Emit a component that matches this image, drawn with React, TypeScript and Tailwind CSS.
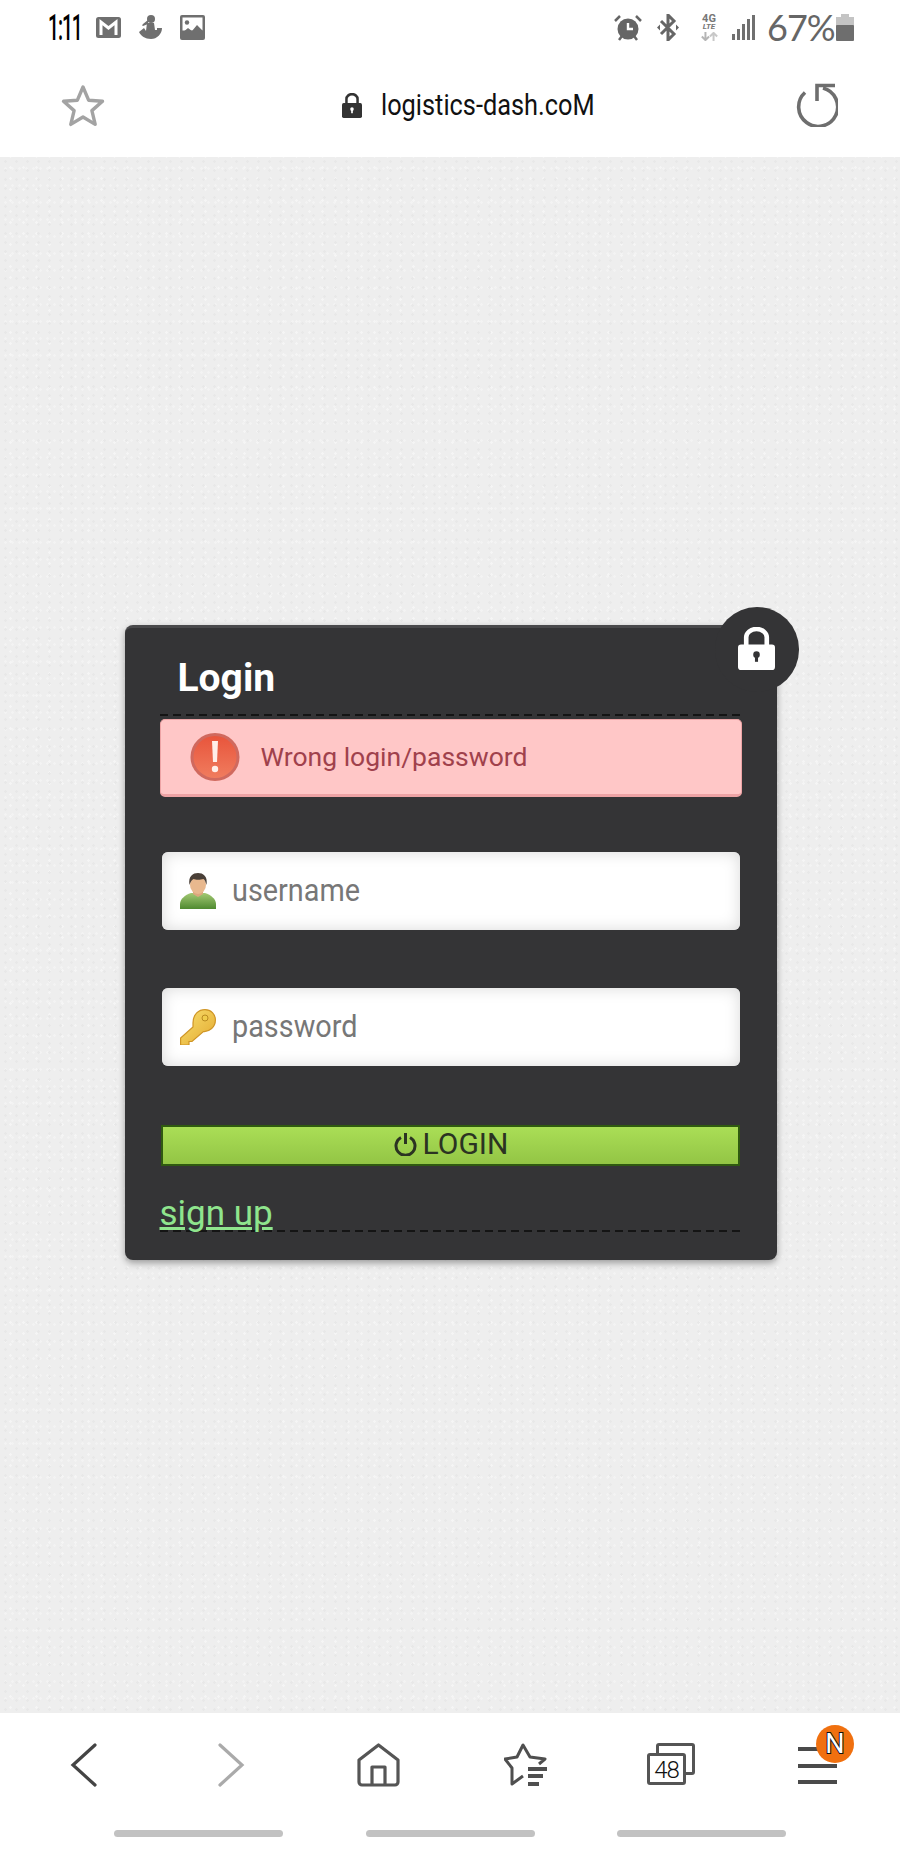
import React from "react";

const Star = () => (
  <svg width="44" height="43" viewBox="0 0 44 43" fill="none" stroke="#a3a3a3" strokeWidth="3.400" strokeLinejoin="round">
    <path d="M22 3l5.600 13.200 13.900 1.100-10.600 9.300 3.300 13.800L22 33l-12.200 7.400 3.300-13.800L2.500 17.300l13.900-1.100z" />
  </svg>
);

const Reload = () => (
  <svg width="44" height="44" viewBox="0 0 44 44" fill="none" stroke="#6e6e6e" strokeWidth="3.600">
    <path d="M11 9.500A19.500 19.500 0 1 0 29 5" />
    <path d="M23 18V2.500h18" strokeLinejoin="miter" />
  </svg>
);

const Lock = ({ className, hole }: { className: string; hole: string }) => (
  <svg className={className} viewBox="0 0 36 42" preserveAspectRatio="none">
    <path d="M8 19v-9a10 8 0 0 1 20 0v9" fill="none" stroke="currentColor" strokeWidth="4.500" />
    <rect x="0" y="17" width="36" height="25" rx="3" fill="currentColor" />
    <circle cx="18" cy="27" r="3.200" fill={hole} />
    <rect x="16.500" y="27" width="3" height="7" fill={hole} />
  </svg>
);

const Gmail = () => (
  <svg width="25" height="21" viewBox="0 0 25 21">
    <rect width="25" height="21" rx="2.500" fill="#6f6f6f" />
    <path d="M5 18V5l7.500 6L20 5v13" fill="none" stroke="#fff" strokeWidth="3" />
  </svg>
);

const Figure = () => (
  <svg width="23" height="25" viewBox="0 0 23 25" fill="#6f6f6f">
    <circle cx="12" cy="4" r="4" />
    <path d="M9 5L4 9c-1 1-1 2 0 2l5-2z" />
    <path d="M8 8h7l1 7 2 0 0-2 5 0c0 6-5 11-11 11C6 24 2 21 0 17l5-4 2 3z" />
  </svg>
);

const ImageIcon = () => (
  <svg width="25" height="25" viewBox="0 0 25 25">
    <rect width="25" height="25" rx="2" fill="#6f6f6f" />
    <rect x="2.500" y="2.500" width="20" height="13" fill="#fff" />
    <circle cx="7" cy="7.500" r="2.200" fill="#6f6f6f" />
    <path d="M2 18l6-5 4 3 5-6 6 6v8H2z" fill="#6f6f6f" />
  </svg>
);

const Alarm = () => (
  <svg width="28" height="26" viewBox="0 0 28 26">
    <circle cx="14" cy="14" r="10.500" fill="#666" />
    <path d="M14 8v6h5" fill="none" stroke="#fff" strokeWidth="2.400" />
    <path d="M1 6l5-5M27 6l-5-5M5 25l3-4M23 25l-3-4" stroke="#666" strokeWidth="2.500" />
  </svg>
);

const Bluetooth = () => (
  <svg width="24" height="27" viewBox="0 0 24 27" fill="none">
    <path d="M5 7l13 13-6 6V1l6 6L5 20" stroke="#666" strokeWidth="3" />
    <path d="M1 13.500l3-3v6zM23 13.500l-3-3v6z" fill="#666" />
  </svg>
);

const Lte = () => (
  <div className="flex h-[27px] w-[20px] flex-col items-center font-['Roboto',sans-serif] font-bold leading-none text-[#777]">
    <span className="text-[11px] leading-[9px]">4G</span>
    <span className="text-[8px] italic leading-[8px]">LTE</span>
    <svg className="mt-[1px]" width="19" height="10" viewBox="0 0 19 10" fill="none" strokeWidth="2.200">
      <path d="M5 0v8M1 5l4 4 4-4" stroke="#b5b5b5" />
      <path d="M14 10V2M10 5l4-4 4 4" stroke="#c8c8c8" />
    </svg>
  </div>
);

const Signal = () => (
  <svg width="23" height="25" viewBox="0 0 23 25" fill="#707070">
    <rect x="0" y="19" width="3" height="6" />
    <rect x="5" y="14" width="3" height="11" />
    <rect x="10" y="9" width="3" height="16" />
    <rect x="15" y="4" width="3" height="21" />
    <rect x="20" y="0" width="3" height="25" />
  </svg>
);

const Battery = () => (
  <svg width="18" height="27" viewBox="0 0 18 27">
    <rect x="5" y="0" width="8" height="3" fill="#c4c4c4" />
    <rect x="0" y="3" width="18" height="10" fill="#c4c4c4" />
    <rect x="0" y="11" width="18" height="16" rx="1" fill="#6e6e6e" />
  </svg>
);

const ErrorIcon = () => (
  <svg width="50" height="48" viewBox="0 0 50 48">
    <defs>
      <linearGradient id="er" x1="0" y1="0" x2="0" y2="1">
        <stop offset="0" stopColor="#e8553c" />
        <stop offset="1" stopColor="#f07c5e" />
      </linearGradient>
    </defs>
    <ellipse cx="25" cy="24" rx="24.500" ry="24" fill="#d0695e" />
    <ellipse cx="25" cy="24" rx="21.500" ry="21" fill="url(#er)" />
    <path d="M22 8h6l-1 21h-4z" fill="#ffeee8" />
    <circle cx="25" cy="36" r="3.200" fill="#ffeee8" />
  </svg>
);

const UserIcon = () => (
  <svg width="36" height="36" viewBox="0 0 36 36">
    <defs>
      <linearGradient id="sh" x1="0" y1="0" x2="0" y2="1">
        <stop offset="0" stopColor="#a3c974" />
        <stop offset="1" stopColor="#4f8a30" />
      </linearGradient>
    </defs>
    <path d="M0 36v-5c0-5 5-9 11-11h14c6 2 11 6 11 11v5z" fill="url(#sh)" />
    <path d="M13 18h10v3l-5 3-5-3z" fill="#dba77d" />
    <ellipse cx="18" cy="12" rx="8" ry="9" fill="#e8b88e" />
    <path d="M9.500 12C8 3 13 0 18 0s10 3 8.500 12c-1-3-1.500-5-3-6-3 1-8 1-10 0-2 1-3 3-4 6z" fill="#4a4038" />
  </svg>
);

const KeyIcon = () => (
  <svg width="36" height="36" viewBox="0 0 36 36">
    <defs>
      <linearGradient id="ky" x1="0" y1="0" x2="1" y2="1">
        <stop offset="0" stopColor="#f8e070" />
        <stop offset="1" stopColor="#e3a82e" />
      </linearGradient>
    </defs>
    <path d="M13 14C13 5 19 .6 25 .6c6 0 10.400 4.400 10.400 10.400 0 7-6 12-12 11.500L12 32.500H9V36H.6v-7l12.400-11z" fill="url(#ky)" stroke="#cf9526" strokeWidth="1.200" />
    <circle cx="25" cy="9" r="3" fill="#f0cc4c" stroke="#b98a22" />
  </svg>
);

const Power = () => (
  <svg width="23" height="24" viewBox="0 0 23 24" fill="none" stroke="#2b3322" strokeWidth="3">
    <path d="M7 5.500a9.500 9.500 0 1 0 9 0" />
    <path d="M11.500 1v11" />
  </svg>
);

const Home = () => (
  <svg width="43" height="44" viewBox="0 0 43 44" fill="none" stroke="#555" strokeWidth="3.200" strokeLinejoin="round">
    <path d="M2 17L21.500 2 41 17v22a3 3 0 0 1-3 3H5a3 3 0 0 1-3-3z" />
    <path d="M15 42V24h13v18" />
  </svg>
);

const StarList = () => (
  <svg width="44" height="43" viewBox="0 0 44 43" fill="none" stroke="#4f4f4f" strokeWidth="3">
    <path d="M35 21l6-5-15-2-7-12-6 12-12 2 7 9v16l11-8" strokeLinejoin="round" />
    <path d="M24 26h19M24 33h15M24 41h11" strokeWidth="4" />
  </svg>
);

const Tabs = () => (
  <div className="relative h-[42px] w-[48px]">
    <div className="absolute right-0 top-0 h-[32px] w-[39px] rounded-[3px] border-[3px] border-[#555]" />
    <div className="absolute bottom-0 left-0 flex h-[32px] w-[39px] items-center justify-center rounded-[3px] border-[3px] border-[#555] bg-white pt-[2px] text-[24px] font-light leading-none tracking-[-1px] text-[#111]">
      48
    </div>
  </div>
);

const Pill = () => <div className="h-[7px] w-[169px] rounded-full bg-[#c2c2c2]" />;

const DashRule = () => (
  <div className="h-[2px] bg-[repeating-linear-gradient(90deg,#141414_0_8px,transparent_8px_13px)]" />
);

export default function App() {
  return (
    <div className="flex h-[1850px] w-[900px] flex-col overflow-hidden bg-white font-['Roboto',sans-serif]">
      <header className="h-[157px] shrink-0 bg-white">
        <div className="flex h-[55px] items-start justify-between pl-[48px] pr-[46px] pt-[13px]">
          <div className="flex items-center">
            <span className="w-[31px] origin-left scale-x-[0.52] whitespace-nowrap text-[37px] font-medium leading-[29px] tracking-[-2px] text-black">
              1:11
            </span>
            <div className="ml-[17px] flex items-center gap-[18px]">
              <Gmail />
              <Figure />
              <ImageIcon />
            </div>
          </div>
          <div className="flex items-center">
            <Alarm />
            <div className="ml-[14px]"><Bluetooth /></div>
            <div className="ml-[19px]"><Lte /></div>
            <div className="ml-[13px]"><Signal /></div>
            <span className="ml-[12px] w-[63px] whitespace-nowrap font-['Lato',sans-serif] text-[36px] font-normal leading-[29px] tracking-[-1px] text-[#666]">67%</span>
            <div className="ml-[6px]"><Battery /></div>
          </div>
        </div>
        <div className="flex items-center justify-between pl-[61px] pr-[62px] pt-[28px]">
          <Star />
          <div className="ml-[36px] flex items-center">
            <Lock className="h-[25px] w-[20px] text-[#333]" hole="#fff" />
            <span className="ml-[19px] w-[212px] origin-left scale-x-[0.845] whitespace-nowrap text-[30px] leading-[28px] text-[#111]">
              logistics-dash.co<span className="uppercase">m</span>
            </span>
          </div>
          <Reload />
        </div>
      </header>

      <main className="flex flex-1 justify-center bg-[#eeeeee] bg-[radial-gradient(circle,#e8e8e8_1px,transparent_1.5px),radial-gradient(circle,#f5f5f5_1px,transparent_1.5px),radial-gradient(circle,#f3f3f3_1px,transparent_1.5px)] bg-[length:11px_9px,13px_11px,7px_17px] bg-[position:0_0,4px_5px,2px_3px]">
        <section className="relative mt-[468px] ml-[1px] h-[635px] w-[652px] rounded-[8px] border-t-[3px] border-[#49494b] bg-[#343436] px-[35px] shadow-[0_3px_7px_rgba(0,0,0,0.35)]">
          <div className="absolute -right-[22px] -top-[21px] flex h-[85px] w-[84px] items-center justify-center rounded-full bg-[#343436] pb-[3px]">
            <Lock className="h-[43px] w-[37px] text-white" hole="#343436" />
          </div>
          <div className="h-[86px] pl-[18px] pt-[27px]">
            <h1 className="text-[39px] font-bold leading-[46px] text-white">Login</h1>
          </div>
          <DashRule />
          <div className="mt-[3px] flex h-[78px] items-center rounded-[5px] border border-b-[3px] border-[#eda3a5] bg-[#ffc7c7] pl-[29px]">
            <ErrorIcon />
            <span className="ml-[21px] text-[26.500px] leading-none text-[#a0414c]">Wrong login/password</span>
          </div>
          <div className="mx-[2px] mt-[55px] flex h-[78px] items-center rounded-[6px] bg-white pl-[18px] shadow-[inset_0_0_16px_#d9d9d9]">
            <UserIcon />
            <input readOnly placeholder="username" className="ml-[16px] flex-1 origin-left scale-x-[0.93] bg-transparent pb-[2px] text-[31px] leading-none outline-none placeholder:text-[#777]" />
          </div>
          <div className="mx-[2px] mt-[58px] flex h-[78px] items-center rounded-[6px] bg-white pl-[18px] shadow-[inset_0_0_16px_#d9d9d9]">
            <KeyIcon />
            <input readOnly placeholder="password" className="ml-[16px] flex-1 origin-left scale-x-[0.93] bg-transparent pb-[2px] text-[31px] leading-none outline-none placeholder:text-[#777]" />
          </div>
          <button className="mx-[1px] mt-[59px] flex h-[41px] w-[579px] items-center justify-center border-2 border-[#2f5a10] bg-linear-to-b from-[#aade56] to-[#93c545] pb-[3px] pl-[2px] text-[30px] leading-none text-[#2b3322]">
            <Power />
            <span className="ml-[6px]">LOGIN</span>
          </button>
          <div className="mt-[32px] h-[32px]">
            <a className="text-[35px] leading-[32px] text-[#8fe58d] underline">sign up</a>
          </div>
          <DashRule />
        </section>
      </main>

      <footer className="h-[137px] shrink-0 bg-white">
        <div className="flex items-start pt-[30px]">
          <svg className="ml-[70px]" width="27" height="44" viewBox="0 0 27 44" fill="none" stroke="#444" strokeWidth="3.200" strokeLinecap="round">
            <path d="M25 2L3 22l22 20" />
          </svg>
          <svg className="ml-[121px]" width="27" height="44" viewBox="0 0 27 44" fill="none" stroke="#aaa" strokeWidth="3.200" strokeLinecap="round">
            <path d="M2 2l22 20L2 42" />
          </svg>
          <div className="ml-[112px]"><Home /></div>
          <div className="ml-[104px]"><StarList /></div>
          <div className="ml-[99px]"><Tabs /></div>
          <div className="relative ml-[103px] mt-[4px] flex w-[39px] flex-col gap-[12.500px]">
            <div className="h-[4px] bg-[#4a4a4a]" />
            <div className="h-[4px] bg-[#4a4a4a]" />
            <div className="h-[4px] bg-[#4a4a4a]" />
            <div className="absolute -right-[17px] -top-[22px] flex h-[38px] w-[38px] items-center justify-center rounded-full bg-[#f0700f] text-[27px] leading-none text-white [paint-order:stroke_fill] [-webkit-text-stroke:2px_#111]">
              N
            </div>
          </div>
        </div>
        <div className="mt-[43px] flex justify-between px-[114px]">
          <Pill />
          <Pill />
          <Pill />
        </div>
      </footer>
    </div>
  );
}
